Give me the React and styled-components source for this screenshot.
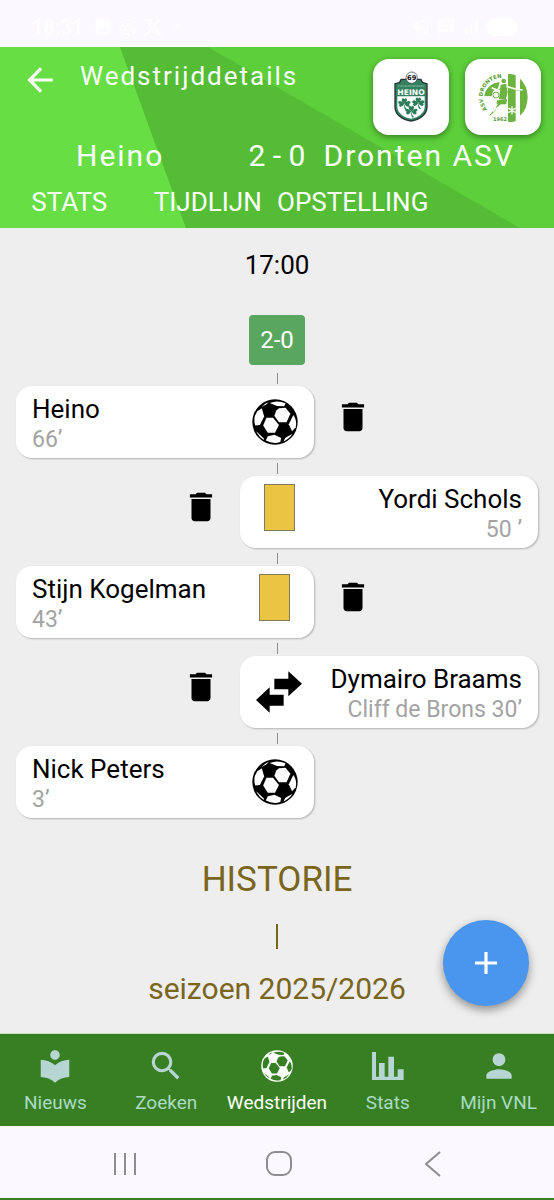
import React from "react";
import styled, { createGlobalStyle, ThemeProvider } from "styled-components";
import {
  MdAdd,
  MdAddToDrive,
  MdArrowBack,
  MdDelete,
  MdImage,
  MdLocalLibrary,
  MdMessage,
  MdPerson,
  MdSearch,
  MdSignalCellularAlt,
  MdVolumeOff
} from "react-icons/md";
import { FaXTwitter } from "react-icons/fa6";

const theme = {
  background: "#eeeeee",
  system: "#fcf8ff",
  primary: "#5ccf3a",
  primaryLight: "#66de44",
  primaryMid: "#55bd35",
  nav: "#377f22",
  navIcon: "#b7d5d3",
  navText: "#a9dbc4",
  score: "#59a75f",
  history: "#7a651c",
  action: "#4a95ee",
  textMuted: "#a3a3a3"
};

const events = [
  { id: 1, side: "home", type: "goal", name: "Heino", detail: "66’", removable: true },
  { id: 2, side: "away", type: "yellow", name: "Yordi Schols", detail: "50 ’", removable: true },
  { id: 3, side: "home", type: "yellow", name: "Stijn Kogelman", detail: "43’", removable: true },
  { id: 4, side: "away", type: "sub", name: "Dymairo Braams", detail: "Cliff de Brons 30’", removable: true },
  { id: 5, side: "home", type: "goal", name: "Nick Peters", detail: "3’", removable: false }
];

const Ball = ({ size, color, patch }) => (
  <svg width={size} height={size} viewBox="6 5 140 140" aria-hidden="true">
    <circle cx="76" cy="75" r="69" fill={color} />
    <g fill={patch}>
      <path d="M80 40 88 33 108 32 123 50 111 76 88 76 74 56Z" />
      <path d="M50 62H70L88 84 76 108 54 108 40 86Z" />
      <path d="M36 33 43 58 30 84 16 86Q8 62 22 42Z" />
      <path d="M54 118 74 114 95 124 92 136Q70 143 48 131Z" />
      <path d="M132 54Q144 72 139 91L128 103 118 82Z" />
      <path d="M60 17Q84 7 108 18L104 27 82 26Z" />
      <path d="M36 29Q46 17 57 15L50 21Z" />
      <path d="M129 111Q119 128 102 134L107 124Z" />
      <path d="M19 103 42 125 43 130Q28 122 19 103Z" />
    </g>
  </svg>
);

const SwapIcon = () => (
  <svg width="46" height="42" viewBox="0 0 138 124" aria-hidden="true">
    <path d="M55 22H97V0L138 37 97 75V54H55Z" />
    <path d="M83 70H41V48L0 86 41 124V103H83Z" />
  </svg>
);

const ChartIcon = () => (
  <svg width="32" height="28" viewBox="0 0 96 84" aria-hidden="true">
    <path
      fill="currentColor"
      d="M0 0H12V74H21V33H38V74H49V14H66V74H77V52H95V84H0Z"
    />
  </svg>
);

const Clover = ({ x, y }) => (
  <g transform={`translate(${x} ${y})`} fill="#2c7d5c">
    <path d="M0 0Q-11-8-7-15-3-19 0-13 3-19 7-15 11-8 0 0Z" />
    <path d="M0 0Q-6 11-13 9-19 5-14 1-21-2-17-7-9-11 0 0Z" />
    <path d="M0 0Q6 11 13 9 19 5 14 1 21-2 17-7 9-11 0 0Z" />
    <path d="M0 0Q1 12 8 17L4 19Q-3 12 0 0Z" />
  </g>
);

const HeinoCrest = () => (
  <CrestSvg width="34" height="50" viewBox="92 62 102 150" role="img" aria-label="Heino">
    <path
      d="M112 82H174L179 92 193 96V167C193 191 171 207 143 211 115 207 93 191 93 167V96L107 92Z"
      fill="#26343a"
    />
    <path
      d="M115 86H171L176 95 189 99V167C189 188 169 203 143 207 117 203 97 188 97 167V99L110 95Z"
      fill="#33815f"
    />
    <path d="M102 135H184V166C184 184 166 198 143 202 120 198 102 184 102 166Z" fill="#fff" />
    <path d="M105 104H182" stroke="#8fc4ab" strokeWidth="3" strokeDasharray="3 1" />
    <text x="143" y="130" fill="#fff" fontSize="23" textAnchor="middle">
      HEINO
    </text>
    <Clover x={123} y={157} />
    <Clover x={165} y={155} />
    <Clover x={144} y={180} />
    <circle cx="145" cy="79" r="17" fill="#fff" stroke="#26343a" strokeWidth="2" />
    <text x="145" y="87" fill="#111" fontSize="20" textAnchor="middle">
      69
    </text>
  </CrestSvg>
);

const DrontenCrest = () => (
  <CrestSvg width="50" height="52" viewBox="345 60 150 156" role="img" aria-label="ASV Dronten">
    <defs>
      <path id="dronten-arc" d="M373 175A57 57 0 0 1 432 83" />
    </defs>
    <g fill="#6cb33f">
      <path d="M435 69Q446 68 458 73V211Q446 214 435 212Z" />
      <path d="M471 83Q493 103 494 137 494 173 471 194Z" />
      <path d="M364 135Q368 108 394 97L410 93 405 112 390 120 386 136Z" />
      <path d="M413 101 430 98 434 124 428 146 408 145Z" />
      <path d="M403 148 432 145 430 160 414 160 395 174Z" />
      <circle cx="422" cy="90" r="7" />
    </g>
    <path
      d="M382 109 406 118 414 111M428 109 455 116 482 118M410 153 394 170 388 188M398 177 380 193"
      fill="none"
      stroke="#6cb33f"
      strokeWidth="3"
    />
    <path
      d="M386 110 411 121M430 106 457 114 479 117M402 158 390 182"
      fill="none"
      stroke="#fff"
      strokeWidth="5"
    />
    <circle cx="399" cy="132" r="9" fill="#fff" stroke="#6cb33f" strokeWidth="3" />
    <path
      d="M447 167V189M437 172 457 184M437 184 457 172"
      stroke="#fff"
      strokeWidth="4"
      strokeLinecap="round"
    />
    <text fill="#559b31" fontSize="16">
      <textPath href="#dronten-arc">ASV DRONTEN</textPath>
    </text>
    <text x="411" y="211" fill="#559b31" fontSize="15" textAnchor="middle">
      1962
    </text>
  </CrestSvg>
);

const EventIcon = ({ type }) => {
  if (type === "goal") return <Ball size={46} color="#000" patch="#fff" />;
  if (type === "sub") return <SwapIcon />;
  return <YellowCard />;
};

const MatchEvent = ({ event }) => (
  <EventItem>
    <Connector />
    <EventRow $away={event.side === "away"}>
      <EventCard $away={event.side === "away"}>
        <EventText $away={event.side === "away"}>
          <PlayerName>{event.name}</PlayerName>
          <EventDetail>{event.detail}</EventDetail>
        </EventText>
        <IconSlot>
          <EventIcon type={event.type} />
        </IconSlot>
      </EventCard>
      {event.removable && (
        <DeleteButton aria-label={`Verwijder ${event.name}`}>
          <MdDelete />
        </DeleteButton>
      )}
    </EventRow>
  </EventItem>
);

const App = () => {
  return (
    <ThemeProvider theme={theme}>
      <GlobalStyle />
      <Page>
        <StatusBar>
          <StatusGroup>
            <Clock>18:31</Clock>
            <MdImage />
            <MdAddToDrive />
            <FaXTwitter />
            <Dot>•</Dot>
          </StatusGroup>
          <StatusGroup>
            <MdVolumeOff />
            <MdMessage />
            <MdSignalCellularAlt />
            <Battery />
          </StatusGroup>
        </StatusBar>

        <Header>
          <HeaderArt viewBox="0 0 554 181" preserveAspectRatio="none" aria-hidden="true">
            <path d="M0 0H120L186 181H0Z" fill={theme.primaryLight} />
            <path d="M120 0H208L520 181H186Z" fill={theme.primaryMid} />
          </HeaderArt>
          <TopRow>
            <BackButton aria-label="Terug">
              <MdArrowBack />
            </BackButton>
            <Title>Wedstrijddetails</Title>
            <Badge>
              <HeinoCrest />
            </Badge>
            <Badge>
              <DrontenCrest />
            </Badge>
          </TopRow>
          <ScoreRow>
            <HomeTeam>Heino</HomeTeam>
            <Result>2 - 0</Result>
            <Team>Dronten ASV</Team>
          </ScoreRow>
          <Tabs>
            <Tab>STATS</Tab>
            <Tab>TIJDLIJN</Tab>
            <Tab>OPSTELLING</Tab>
          </Tabs>
        </Header>

        <Main>
          <KickOff>17:00</KickOff>
          <ScoreChip>2-0</ScoreChip>
          <Timeline>
            {events.map(event => (
              <MatchEvent key={event.id} event={event} />
            ))}
          </Timeline>
          <HistoryTitle>HISTORIE</HistoryTitle>
          <HistoryLine />
          <Season>seizoen 2025/2026</Season>
        </Main>

        <Footer>
          <AddButton aria-label="Toevoegen">
            <MdAdd />
          </AddButton>
          <Nav>
            <NavLink href="#nieuws">
              <NavIcon>
                <MdLocalLibrary />
              </NavIcon>
              Nieuws
            </NavLink>
            <NavLink href="#zoeken">
              <NavIcon>
                <MdSearch />
              </NavIcon>
              Zoeken
            </NavLink>
            <NavLink href="#wedstrijden" $active>
              <NavIcon>
                <Ball size={32} color="#fff" patch={theme.nav} />
              </NavIcon>
              Wedstrijden
            </NavLink>
            <NavLink href="#stats">
              <NavIcon>
                <ChartIcon />
              </NavIcon>
              Stats
            </NavLink>
            <NavLink href="#mijn-vnl">
              <NavIcon>
                <MdPerson />
              </NavIcon>
              Mijn VNL
            </NavLink>
          </Nav>
          <SystemNav>
            <SystemButton aria-label="Recente apps">
              <svg width="24" height="24" viewBox="0 0 24 24">
                <path d="M2 1V23M12 1V23M22 1V23" />
              </svg>
            </SystemButton>
            <SystemButton aria-label="Start">
              <svg width="26" height="26" viewBox="0 0 26 26">
                <rect x="1" y="1" width="24" height="23" rx="8" />
              </svg>
            </SystemButton>
            <SystemButton aria-label="Vorige">
              <svg width="16" height="26" viewBox="0 0 16 26">
                <path d="M15 1 1 13 15 25" />
              </svg>
            </SystemButton>
          </SystemNav>
        </Footer>
      </Page>
    </ThemeProvider>
  );
};

export default App;

const GlobalStyle = createGlobalStyle`
  * {
    box-sizing: border-box;
  }

  body {
    margin: 0;
    font-family: Roboto, sans-serif;
    background: ${props => props.theme.background};
  }

  button {
    display: flex;
    align-items: center;
    justify-content: center;
    padding: 0;
    border: none;
    background: none;
    color: inherit;
    font: inherit;
    cursor: pointer;
  }
`;

const Page = styled.div`
  display: flex;
  flex-direction: column;
  min-height: 100vh;
`;

const StatusBar = styled.div`
  display: flex;
  justify-content: space-between;
  padding: 14px 36px 7px 32px;
  background: ${props => props.theme.system};
  color: #ffffff;
  font-size: 20px;
`;

const StatusGroup = styled.div`
  display: flex;
  align-items: center;
  gap: 5px;
  height: 26px;
`;

const Clock = styled.span`
  margin-right: 4px;
  font-size: 20px;
  font-weight: bold;
`;

const Dot = styled.span`
  margin-left: 6px;
`;

const Battery = styled.span`
  width: 32px;
  height: 18px;
  border-radius: 9px;
  background: #ffffff;
`;

const Header = styled.header`
  position: relative;
  padding: 12px 13px 8px 24px;
  background: ${props => props.theme.primary};
  color: #ffffff;
`;

const HeaderArt = styled.svg`
  position: absolute;
  inset: 0;
  width: 100%;
  height: 100%;
`;

const TopRow = styled.div`
  position: relative;
  display: flex;
  align-items: flex-start;
  gap: 16px;
`;

const BackButton = styled.button`
  width: 32px;
  height: 42px;
  font-size: 38px;

  svg {
    flex-shrink: 0;
  }
`;

const Title = styled.h1`
  flex: 1;
  margin: 0 0 0 8px;
  font-size: 26px;
  font-weight: normal;
  letter-spacing: 2px;
  line-height: 34px;
`;

const Badge = styled.div`
  display: flex;
  align-items: center;
  justify-content: center;
  width: 76px;
  height: 76px;
  border-radius: 16px;
  background: #ffffff;
  box-shadow: 0 2px 6px rgba(0, 0, 0, 0.4);
`;

const CrestSvg = styled.svg`
  overflow: visible;
  font-family: "DejaVu Sans", sans-serif;
  font-weight: bold;
`;

const ScoreRow = styled.div`
  position: relative;
  display: grid;
  grid-template-columns: 1fr auto 1fr;
  gap: 18px;
  margin: 3px -13px 0 -24px;
  font-size: 30px;
  line-height: 36px;
`;

const Team = styled.span`
  letter-spacing: 2px;
  white-space: nowrap;
`;

const HomeTeam = styled(Team)`
  padding-left: 76px;
`;

const Result = styled.span`
  white-space: nowrap;
`;

const Tabs = styled.nav`
  position: relative;
  display: flex;
  margin: 10px -13px 0 -24px;
`;

const Tab = styled.button`
  min-width: 25%;
  height: 36px;
  font-size: 26px;
`;

const Main = styled.main`
  display: flex;
  flex: 1;
  flex-direction: column;
  align-items: center;
  padding: 20px 16px 26px;
`;

const KickOff = styled.div`
  font-size: 26px;
  line-height: 34px;
`;

const ScoreChip = styled.div`
  margin-top: 33px;
  padding: 0 11px;
  border-radius: 4px;
  background: ${props => props.theme.score};
  color: #ffffff;
  font-size: 24px;
  line-height: 50px;
`;

const Timeline = styled.ul`
  width: 100%;
  margin: 3px 0 0;
  padding: 0;
  list-style: none;
`;

const EventItem = styled.li`
  display: flex;
  flex-direction: column;
  align-items: center;
`;

const Connector = styled.span`
  width: 1px;
  height: 11px;
  margin: 5px 0 2px;
  background: #8c8c8c;
`;

const EventRow = styled.div`
  display: flex;
  flex-direction: ${props => (props.$away ? "row-reverse" : "row")};
  align-items: flex-start;
  gap: 20px;
  width: 100%;
`;

const EventCard = styled.article`
  display: flex;
  flex-direction: ${props => (props.$away ? "row-reverse" : "row")};
  align-items: center;
  justify-content: space-between;
  width: 57%;
  height: 72px;
  padding: 0 16px;
  border-radius: 16px;
  background: #ffffff;
  box-shadow: 1px 1px 2px rgba(0, 0, 0, 0.25);
`;

const EventText = styled.div`
  padding-top: 4px;
  text-align: ${props => (props.$away ? "right" : "left")};
  white-space: nowrap;
`;

const PlayerName = styled.div`
  font-size: 26px;
  line-height: 32px;
`;

const EventDetail = styled.div`
  color: ${props => props.theme.textMuted};
  font-size: 23px;
  line-height: 30px;
`;

const IconSlot = styled.div`
  display: flex;
  align-items: center;
  justify-content: center;
  width: 46px;
  height: 60px;
`;

const YellowCard = styled.span`
  width: 31px;
  height: 47px;
  margin-bottom: 10px;
  border: 1px solid #807a5c;
  background: #ebc443;
`;

const DeleteButton = styled.button`
  width: 38px;
  height: 62px;
  font-size: 38px;
`;

const HistoryTitle = styled.h2`
  margin: 41px 0 0;
  color: ${props => props.theme.history};
  font-size: 35px;
  font-weight: normal;
  line-height: 42px;
`;

const HistoryLine = styled.span`
  width: 2px;
  height: 25px;
  margin: 23px 0 22px;
  background: ${props => props.theme.history};
`;

const Season = styled.div`
  color: ${props => props.theme.history};
  font-size: 30px;
  line-height: 36px;
`;

const Footer = styled.footer`
  position: sticky;
  bottom: 0;
  border-bottom: 2px solid ${props => props.theme.nav};
`;

const AddButton = styled.button`
  position: absolute;
  right: 25px;
  bottom: 100%;
  width: 86px;
  height: 86px;
  margin-bottom: 27px;
  border-radius: 50%;
  background: ${props => props.theme.action};
  box-shadow: 0 4px 10px rgba(0, 0, 0, 0.4);
  color: #ffffff;
  font-size: 38px;
`;

const Nav = styled.nav`
  display: grid;
  grid-template-columns: repeat(5, 1fr);
  padding: 12px 0 11px;
  border-top: 1px solid #c4e2bd;
  background: ${props => props.theme.nav};
`;

const NavLink = styled.a`
  display: flex;
  flex-direction: column;
  align-items: center;
  gap: 6px;
  color: ${props => (props.$active ? "#ffffff" : props.theme.navText)};
  font-size: 19px;
  line-height: 24px;
  text-decoration: none;
`;

const NavIcon = styled.span`
  display: flex;
  align-items: center;
  justify-content: center;
  height: 39px;
  color: ${props => props.theme.navIcon};
  font-size: 38px;
`;

const SystemNav = styled.div`
  display: flex;
  align-items: center;
  justify-content: space-around;
  height: 72px;
  padding: 4px 44px 0 48px;
  background: ${props => props.theme.system};
`;

const SystemButton = styled.button`
  width: 64px;
  height: 48px;

  svg {
    fill: none;
    stroke: #8f8a93;
    stroke-width: 2;
  }
`;
